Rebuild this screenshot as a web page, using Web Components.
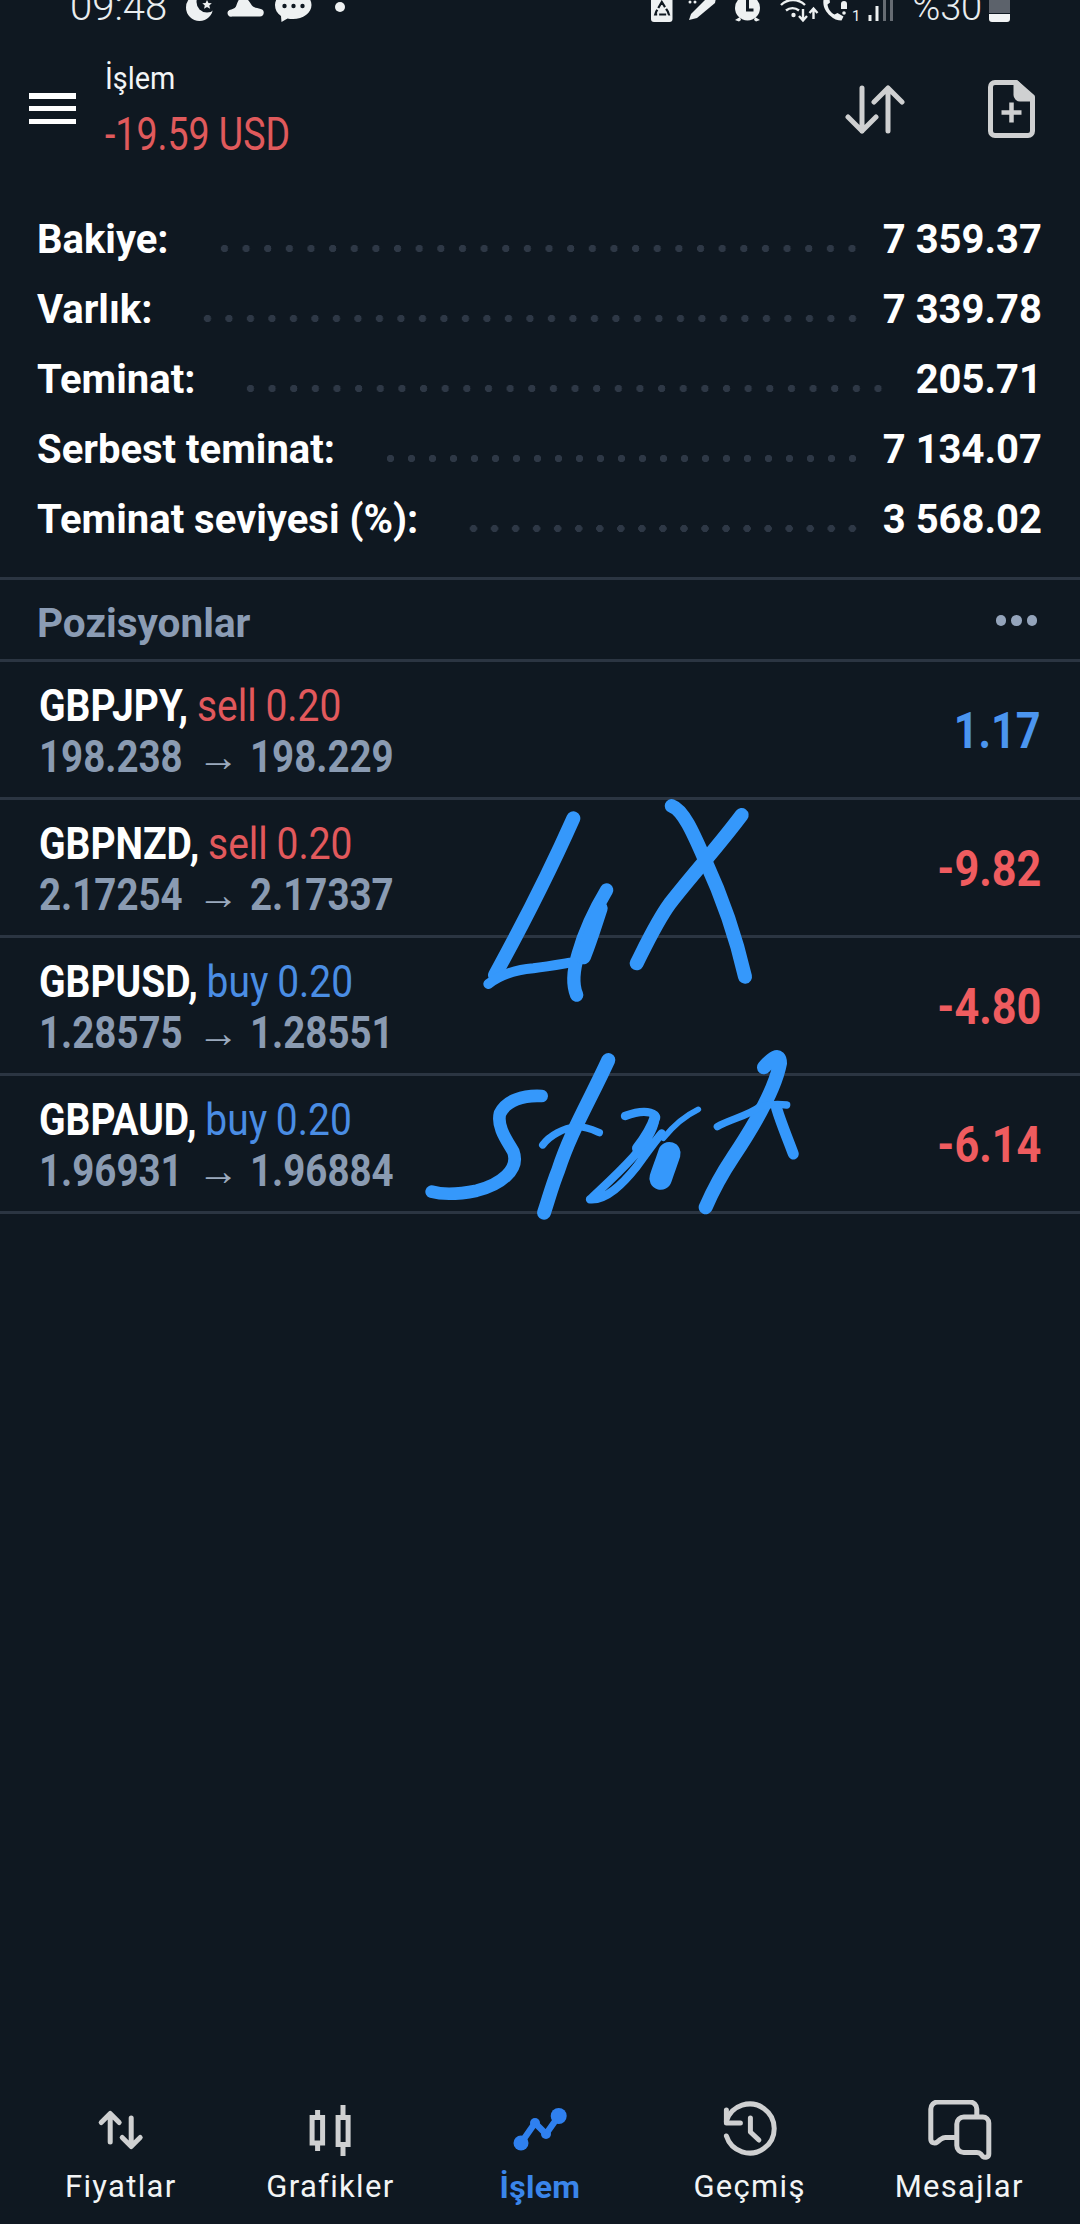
<!DOCTYPE html>
<html lang="tr"><head><meta charset="utf-8"><title>İşlem</title>
<style>
html,body{margin:0;padding:0;background:#0f1821}
body{width:1080px;height:2224px;overflow:hidden;font-family:Roboto,"Liberation Sans",sans-serif;color:#fff}
</style></head><body>
<app-screen>
  <status-bar slot="status"></status-bar>
  <top-bar slot="top" title="İşlem" amount="-19.59 USD"></top-bar>
  <account-summary slot="summary">
    <summary-row><span>Bakiye:</span><span slot="value">7 359.37</span></summary-row>
    <summary-row><span>Varlık:</span><span slot="value">7 339.78</span></summary-row>
    <summary-row style="--tail:27px"><span>Teminat:</span><span slot="value">205.71</span></summary-row>
    <summary-row><span>Serbest teminat:</span><span slot="value">7 134.07</span></summary-row>
    <summary-row><span>Teminat seviyesi (%):</span><span slot="value">3 568.02</span></summary-row>
  </account-summary>
  <section-head slot="list">Pozisyonlar</section-head>
  <trade-row slot="list" side="sell" tone="gain"><span slot="symbol">GBPJPY,</span><span slot="deal">sell 0.20</span><span slot="open">198.238</span><span slot="close">198.229</span><span slot="profit">1.17</span></trade-row>
  <trade-row slot="list" side="sell" tone="loss"><span slot="symbol">GBPNZD,</span><span slot="deal">sell 0.20</span><span slot="open">2.17254</span><span slot="close">2.17337</span><span slot="profit">-9.82</span></trade-row>
  <trade-row slot="list" side="buy" tone="loss"><span slot="symbol">GBPUSD,</span><span slot="deal">buy 0.20</span><span slot="open">1.28575</span><span slot="close">1.28551</span><span slot="profit">-4.80</span></trade-row>
  <trade-row slot="list" side="buy" tone="loss" last><span slot="symbol">GBPAUD,</span><span slot="deal">buy 0.20</span><span slot="open">1.96931</span><span slot="close">1.96884</span><span slot="profit">-6.14</span></trade-row>
  <ink-overlay slot="ink"></ink-overlay>
  <bottom-nav slot="nav">
    <nav-item icon="prices">Fiyatlar</nav-item>
    <nav-item icon="charts">Grafikler</nav-item>
    <nav-item icon="trade" active>İşlem</nav-item>
    <nav-item icon="history">Geçmiş</nav-item>
    <nav-item icon="messages">Mesajlar</nav-item>
  </bottom-nav>
</app-screen>
<script>
function def(name, html, init){
  customElements.define(name, class extends HTMLElement{
    connectedCallback(){
      if(this.shadowRoot) return;
      const r=this.attachShadow({mode:'open'});
      r.innerHTML = typeof html==='function' ? html(this) : html;
      if(init) init(this,r);
    }
  });
}
def('app-screen',`<style>
:host{display:flex;flex-direction:column;width:1080px;height:2224px;position:relative;background:#0f1821;overflow:hidden}
.grow{flex:1}
</style>
<slot name="status"></slot><slot name="top"></slot><slot name="summary"></slot><slot name="list"></slot>
<div class="grow"></div><slot name="nav"></slot><slot name="ink"></slot>`);

def('status-bar',`<style>
:host{display:flex;height:27px;overflow:hidden;padding-left:70px;color:#e9edef;font:300 40px/40px Roboto,sans-serif;flex:none}
span{margin-top:-13px;white-space:nowrap}
svg{display:block;flex:none}
.l{margin-left:14px}.r{margin-left:auto}
.pc{margin-left:7px;font-size:38px;letter-spacing:-.2px}
.b{margin-left:7px;margin-right:70px}
</style>
<span>09:48</span>
<svg class="l" width="170" height="27" viewBox="180 0 170 27" fill="#eef1f2">
  <circle cx="198.5" cy="7.5" r="13.5"/><circle cx="206" cy="2" r="10.5" fill="#0f1821"/><path d="M206 0l1.5 3 3.3.3-2.5 2.2.8 3.2-3.1-1.7-3 1.7.8-3.2-2.5-2.2 3.3-.3z"/>
  <path d="M231 16.500h28a3.800 3.800 0 0 0 .8-7.500c-3-.8-5.500-1-7.800-2.500-2.500-2-4-7-8-9-5-2-7 3-9 9-1.500 2.500-4 2.500-6.500 3.500a3.500 3.500 0 0 0 2.500 6.500z"/>
  <path d="M292 -9c10 0 18.500 6 18.500 14s-8.500 14-18.500 14c-2 0-4-.2-5.500-.6l-6 3.600-.5-6c-4-2.700-6-6.500-6-11 0-8 8-14 18-14z"/>
  <g fill="#0f1821"><circle cx="283.500" cy="6" r="2.200"/><circle cx="292.500" cy="6" r="2.200"/><circle cx="301.500" cy="6" r="2.200"/></g>
  <circle cx="339" cy="7" r="5"/>
</svg>
<svg class="r" width="260" height="27" viewBox="645 0 260 27" fill="#eef1f2">
  <rect x="651" y="-8" width="21.500" height="30" rx="3"/>
  <path d="M661.800 2l-5.500 9.500 -1 3h13.500l-1-3z" fill="none" stroke="#0f1821" stroke-width="2.200" stroke-dasharray="7 2"/>
  <path d="M689 20l2-6L707-2h9l-1 5-18 15z"/><circle cx="690" cy="2" r="1.500"/><circle cx="695" cy="2" r="1.500"/>
  <circle cx="747.500" cy="8" r="12.500"/><path d="M735 20l5-3 1 3-2 1.500zM760 20l-5-3-1 3 2 1.500z"/>
  <path d="M747.500 0v10h6" fill="none" stroke="#0f1821" stroke-width="3"/>
  <g fill="none" stroke="#eef1f2" stroke-width="2.400"><path d="M781 5a17 17 0 0 1 24 0"/><path d="M786 10.500a10 10 0 0 1 13 0"/><path d="M803 9v11m-4-4l4 4.500 4-4.500M813.500 19V9m-4 4l4-4.500 4 4.500"/></g>
  <circle cx="793.500" cy="15" r="2.200"/>
  <path d="M824.500-4c-3 8 0 15 6 20 3 3 7 4.500 11 4.500l2-4-6-3.500-3 1.500c-4-2-6.500-6-7-10l2.500-2-1-6z"/>
  <path d="M841 9V4a3 3 0 0 1 6 0v5zM839-1l3 1M850-1l-3 1" /><circle cx="844" cy="13" r="1.800"/>
  <text x="852" y="21" font-family="Roboto,sans-serif" font-size="15" font-weight="400">1</text>
  <rect x="868.500" y="15" width="3" height="6"/><rect x="875.500" y="6" width="3" height="15"/>
  <rect x="883" y="-2" width="3" height="23" fill="#666c73"/><rect x="890" y="-2" width="3" height="23" fill="#666c73"/>
</svg>
<span class="pc">%30</span>
<svg class="b" width="21" height="23" viewBox="0 0 21 23"><path d="M0 0h21v13H0z" fill="#5c626b"/><path d="M0 14h21v5a3 3 0 0 1-3 3H3a3 3 0 0 1-3-3z" fill="#f1f3f4"/></svg>`);

def('cond-text',`<style>
:host{display:inline-block;white-space:nowrap;transform:scaleX(var(--sx,.84));transform-origin:var(--ox,left) center}
</style><slot></slot>`);

def('top-bar',h=>`<style>
:host{display:flex;align-items:center;height:163px;padding:0 45px 0 29px;flex:none}
.menu{width:47px;height:31px;display:flex;flex-direction:column;justify-content:space-between;flex:none}
.menu i{display:block;height:5.500px;background:#fff}
.t{margin-left:29px;margin-top:0;display:flex;flex-direction:column}
.a{font:400 32px/40px Roboto,sans-serif;color:#f3f5f6;--sx:.9}
.b{font:400 46px/50px Roboto,sans-serif;color:#e05a5c;margin-top:11px;--sx:.815}
svg{display:block;flex:none}
.x{margin-left:auto}.y{margin-left:83px}
</style>
<div class="menu"><i></i><i></i><i></i></div>
<div class="t"><cond-text class="a">${h.getAttribute('title')}</cond-text><cond-text class="b">${h.getAttribute('amount')}</cond-text></div>
<svg class="x" width="60" height="50" viewBox="0 0 60 50" fill="none" stroke="#cfd0d1" stroke-width="5" stroke-linecap="round" stroke-linejoin="round"><path d="M17 4v43M3 33l14 14 14-14"/><path d="M43 47V4M29 18L43 4l14 14"/></svg>
<svg class="y" width="47" height="58" viewBox="0 0 47 58" fill="none" stroke="#cfd0d1" stroke-width="5" stroke-linejoin="round"><path d="M28 2.500H7a4.500 4.500 0 0 0-4.500 4.500v44A4.500 4.500 0 0 0 7 55.500h33a4.500 4.500 0 0 0 4.500-4.500V17z"/><path d="M28 2.500L44.500 19H32a4 4 0 0 1-4-4z" fill="#cfd0d1"/><path d="M13.500 32.500h20M23.500 22.500v20" stroke-width="4.500"/></svg>`);

def('account-summary',`<style>:host{display:block;padding:15px 0 22px;flex:none}</style><slot></slot>`);

def('summary-row',`<style>
:host{display:flex;align-items:center;height:70px;padding:0 38px 0 37px;font:700 40px/70px Roboto,sans-serif;color:#fff;white-space:nowrap}
.dots{flex:1;height:7px;margin:0 var(--tail,20px) 0 45px;position:relative;top:8px;background:radial-gradient(circle at center,#2e3846 3.4px,transparent 3.900px) space center/21px 7px}
</style><slot></slot><div class="dots"></div><slot name="value"></slot>`);

def('section-head',`<style>
:host{display:flex;align-items:center;justify-content:space-between;height:71px;padding:8px 43px 0 37px;border-top:3px solid #2b3542;font:700 40.500px/71px Roboto,sans-serif;color:#8b9cb4;flex:none}
.m{display:flex;gap:5px;margin-top:-6px}.m i{width:10.500px;height:10.500px;border-radius:50%;background:#94a4bb;display:block}
</style><slot></slot><div class="m"><i></i><i></i><i></i></div>`);

def('trade-row',h=>{
  const side=h.getAttribute('side'), tone=h.getAttribute('tone');
  return `<style>
:host{display:flex;justify-content:space-between;align-items:center;height:135px;border-top:3px solid #2b3542;padding:0 39px 0 39px;flex:none;${h.hasAttribute('last')?'border-bottom:3px solid #2b3542;':''}}
.info{display:flex;flex-direction:column;padding-top:4px}
.l1{font:400 44px/50px Roboto,sans-serif;--sx:.885;word-spacing:-1px}
.sym{font-weight:700;color:#fff}
.deal{color:${side==='buy'?'#4a8de4':'#e2595c'}}
.l2{display:grid;grid-template-columns:158px 53px auto;align-items:center;height:50px;margin-top:1px;font:700 45px/50px Roboto,sans-serif;color:#8a9bb2;--sx:.855}
.arr{font:400 42px/50px "Liberation Sans",sans-serif;color:#9aa9bd;--sx:1}
.p{font:700 50px/50px Roboto,sans-serif;--sx:.864;--ox:right;margin-top:2px;color:${tone==='gain'?'#4b95ef':'#ef5c5f'}}
</style>
<div class="info"><cond-text class="l1"><span class="sym"><slot name="symbol"></slot></span> <span class="deal"><slot name="deal"></slot></span></cond-text>
<div class="l2"><cond-text><slot name="open"></slot></cond-text><cond-text class="arr">→</cond-text><cond-text><slot name="close"></slot></cond-text></div></div>
<cond-text class="p"><slot name="profit"></slot></cond-text>`});

def('ink-overlay',`<style>
:host{position:absolute;left:400px;top:780px;width:420px;height:460px;pointer-events:none}
svg{display:block}
</style>
<svg width="420" height="460" viewBox="0 0 1260 1380" fill="none" stroke="#3598fb" stroke-linecap="round" stroke-linejoin="round">
 <g stroke-width="42">
  <path d="M520 115C460 250 370 430 285 585"/>
  <path d="M815 78C850 90 880 160 915 240C975 370 1010 480 1035 590"/>
  <path d="M1025 105C950 205 880 280 810 370C770 425 740 490 710 550"/>
  <path d="M625 840C570 960 510 1060 475 1170C455 1220 445 1260 432 1298"/>
  <path d="M1092 862C1115 835 1140 815 1140 850C1125 930 1060 1040 1000 1130C960 1190 935 1240 917 1282"/>
 </g>
 <path d="M425 948C370 945 320 960 300 1000C290 1040 320 1080 340 1115C360 1170 300 1215 230 1232C180 1242 130 1245 95 1235" stroke-width="38"/>
 <path d="M265 612C300 585 340 570 400 565C440 560 480 553 510 548" stroke-width="30"/>
 <path d="M620 330C590 380 555 450 535 520C520 570 515 610 530 645" stroke-width="40"/>
 <path d="M600 385C585 430 570 480 550 530" stroke-width="46"/>
 <path d="M428 1095C450 1065 490 1045 530 1040C560 1040 580 1050 598 1058" stroke-width="22"/>
 <path d="M675 1008C710 995 745 990 765 1005C770 1040 740 1085 700 1130C655 1180 610 1220 570 1258C620 1262 670 1210 710 1160C735 1125 760 1090 785 1060" stroke-width="25"/>
 <path d="M765 1012C755 1045 735 1075 712 1105" stroke-width="32"/>
 <path d="M895 988C860 1005 825 1030 790 1075" stroke-width="17"/>
 <path d="M808 1120C800 1145 790 1170 782 1195" stroke-width="68"/>
 <path d="M952 1040C985 1020 1050 1005 1080 980C1110 972 1140 972 1160 975" stroke-width="22"/>
 <path d="M1130 985C1145 1035 1165 1080 1180 1122" stroke-width="33"/>
</svg>`);

def('bottom-nav',`<style>
:host{display:grid;grid-template-columns:repeat(5,1fr);height:124px;padding:0 16px;flex:none}
</style><slot></slot>`);

const ICONS={
 prices:`<svg viewBox="80.800 2100 80 60" fill="none" stroke="#cfd0d1" stroke-width="5" stroke-linecap="round" stroke-linejoin="round"><path d="M110 2142v-28M101 2122.500l9-9 9 9"/><path d="M131 2118v28M122 2137.500l9 9 9-9"/></svg>`,
 charts:`<svg viewBox="290.400 2100 80 60" fill="none" stroke="#cfd0d1"><path d="M318 2110v41M343.400 2105v51" stroke-width="5"/><rect x="312.500" y="2117.500" width="10.500" height="25.500" stroke-width="5" fill="#0f1821"/><rect x="338.500" y="2117.500" width="10" height="27" stroke-width="5" fill="#0f1821"/></svg>`,
 trade:`<svg viewBox="500 2100 80 60"><path d="M521 2143L535 2123L546 2134L558.700 2116" fill="none" stroke="#2f80ef" stroke-width="6.500" stroke-linejoin="round"/><g fill="#2f80ef"><circle cx="521" cy="2143" r="7.500"/><circle cx="535" cy="2123" r="5"/><circle cx="546" cy="2134" r="5"/><circle cx="558.700" cy="2116" r="8"/></g></svg>`,
 history:`<svg viewBox="709.600 2100 80 60" fill="none" stroke="#cfd0d1" stroke-width="5" stroke-linecap="round" stroke-linejoin="round"><path d="M726 2136a24.500 24.500 0 1 0 0-15"/><path d="M726 2110v13h14"/><path d="M750 2118v14l8.500 8"/></svg>`,
 messages:`<svg viewBox="919.200 2100 80 60" fill="none" stroke="#cfd0d1" stroke-width="5" stroke-linecap="round" stroke-linejoin="round"><path d="M977 2115v-6a7 7 0 0 0-7-7h-32a7 7 0 0 0-7 7v30c0 4 4 5 6.500 3l3-2.500c1.500-1 3-2 5-2h9"/><path d="M964 2117h19a6 6 0 0 1 6 6v31c0 3.500-4 4-6 2.500l-2-2.500c-1-1-2.500-1.500-4-1.500h-13a7 7 0 0 1-7-7v-21.500a7 7 0 0 1 7-7z"/></svg>`
};
def('nav-item',h=>`<style>
:host{display:flex;flex-direction:column;align-items:center;font:${h.hasAttribute('active')?'700 32px':'400 31px'}/40px Roboto,sans-serif;letter-spacing:${h.hasAttribute('active')?'.3px':'1.300px'};color:${h.hasAttribute('active')?'#3a85ea':'#f2f4f5'}}
.i{width:80px;height:60px;flex:none}
.i svg{display:block;width:80px;height:60px}
.l{margin-top:7px}
</style><div class="i">${ICONS[h.getAttribute('icon')]}</div><div class="l"><slot></slot></div>`);
</script>
</body></html>
